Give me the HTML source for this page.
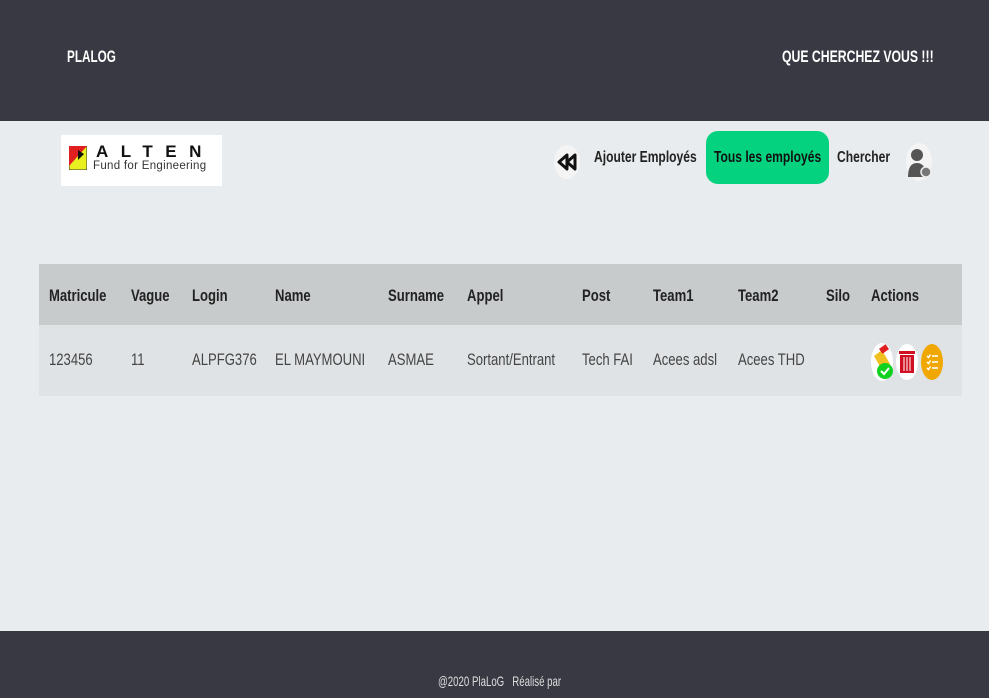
<!DOCTYPE html>
<html><head><meta charset="utf-8"><style>
*{margin:0;padding:0;box-sizing:border-box}
body{width:989px;height:698px;overflow:hidden;background:#e9ecee;font-family:"Liberation Sans",sans-serif;position:relative}
.t{position:absolute;white-space:nowrap;transform-origin:0 50%;transform:scaleX(.77);line-height:20px}
.b{font-weight:bold}
</style></head><body>
<div style="position:absolute;left:0;top:0;width:989px;height:121px;background:#393944"></div>
<div class="t b" style="left:67px;top:47px;color:#fff;font-size:17px;transform:scaleX(.69)">PLALOG</div>
<div class="t b" style="left:782px;top:47px;color:#fff;font-size:17px;transform:scaleX(.72)">QUE CHERCHEZ VOUS !!!</div>

<div style="position:absolute;left:61px;top:135px;width:161px;height:51px;background:#fff"></div>
<svg style="position:absolute;left:69px;top:146px" width="18" height="24" viewBox="0 0 18 24"><rect x="0" y="0" width="18" height="24" fill="#e8f020" stroke="#333" stroke-width="1"/><polygon points="0,0 18,0 0,20" fill="#e02020"/><polygon points="9,4 15,8 9,14" fill="#111"/></svg>
<div style="position:absolute;left:96px;top:143px;font-size:17px;font-weight:bold;letter-spacing:12.5px;color:#111;line-height:17px">ALTEN</div>
<div style="position:absolute;left:93px;top:160px;font-size:11.5px;color:#333;line-height:13px;letter-spacing:0.3px">Fund for Engineering</div>

<div style="position:absolute;left:554px;top:145px;width:26px;height:34px;border-radius:50%;background:#f4f4f4"></div>
<svg style="position:absolute;left:557px;top:153px" width="20" height="18" viewBox="0 0 20 18"><path d="M10 2 L2 9 L10 16 Z M18 2 L10 9 L18 16 Z" fill="none" stroke="#111" stroke-width="3" stroke-linejoin="round"/></svg>
<div class="t b" style="left:594px;top:148px;font-size:16px;color:#222;transform:scaleX(.755)">Ajouter Employés</div>
<div style="position:absolute;left:706px;top:131px;width:123px;height:53px;border-radius:12px;background:#05d27f"></div>
<div class="t b" style="left:714px;top:148px;font-size:16px;color:#111;transform:scaleX(.755)">Tous les employés</div>
<div class="t b" style="left:837px;top:148px;font-size:16px;color:#222;transform:scaleX(.755)">Chercher</div>
<div style="position:absolute;left:906px;top:143px;width:26px;height:38px;border-radius:50%;background:#f4f4f4"></div>
<svg style="position:absolute;left:906px;top:145px" width="26" height="36" viewBox="0 0 26 36"><circle cx="11" cy="10" r="6" fill="#555"/><path d="M2 32 Q2 18 11 18 Q20 18 20 32 Z" fill="#555"/><circle cx="20" cy="27" r="5" fill="#777" stroke="#eee" stroke-width="1.5"/></svg>

<div style="position:absolute;left:39px;top:264px;width:923px;height:61px;background:#c8cbcc"></div>
<div style="position:absolute;left:39px;top:325px;width:923px;height:71px;background:#e0e3e5"></div>
<div class="b" style="position:absolute;top:286px;left:0;font-size:17px;color:#222">
<span class="t" style="left:49px">Matricule</span><span class="t" style="left:131px">Vague</span><span class="t" style="left:192px">Login</span><span class="t" style="left:275px">Name</span><span class="t" style="left:388px">Surname</span><span class="t" style="left:467px">Appel</span><span class="t" style="left:582px">Post</span><span class="t" style="left:653px">Team1</span><span class="t" style="left:738px">Team2</span><span class="t" style="left:826px">Silo</span><span class="t" style="left:871px">Actions</span></div>
<div style="position:absolute;top:350px;left:0;font-size:17px;color:#444">
<span class="t" style="left:49px">123456</span><span class="t" style="left:131px">11</span><span class="t" style="left:192px">ALPFG376</span><span class="t" style="left:275px">EL MAYMOUNI</span><span class="t" style="left:388px">ASMAE</span><span class="t" style="left:467px">Sortant/Entrant</span><span class="t" style="left:582px">Tech FAI</span><span class="t" style="left:653px">Acees adsl</span><span class="t" style="left:738px">Acees THD</span></div>

<svg style="position:absolute;left:870px;top:342px" width="76" height="42" viewBox="0 0 76 42">
<ellipse cx="12" cy="20" rx="11" ry="19" fill="#fff"/><polygon points="4,14 12,8 20,22 12,28" fill="#f0c020"/><rect x="10" y="4" width="8" height="6" fill="#e02020" transform="rotate(-35 14 7)"/><circle cx="15" cy="29" r="8" fill="#10d020"/><path d="M11 29 l3 3 l5 -6" stroke="#fff" stroke-width="2" fill="none"/>
<ellipse cx="37" cy="20" rx="11" ry="18" fill="#fff"/><rect x="30" y="13" width="14" height="18" fill="#d01020"/><rect x="29" y="9" width="16" height="3" fill="#d01020"/><path d="M34 15v14M37 15v14M40 15v14" stroke="#fff" stroke-width="1"/>
<ellipse cx="62" cy="20" rx="11" ry="18" fill="#f0a800"/><path d="M57 14l1.5 1.5l2-3M57 20l1.5 1.5l2-3M57 26l1.5 1.5l2-3M62 14h6M62 20h6M62 26h6" stroke="#fff" stroke-width="1.5" fill="none"/>
</svg>

<div style="position:absolute;left:0;top:631px;width:989px;height:67px;background:#393944"></div>
<div class="t" style="left:438px;top:671px;color:#ddd;font-size:14px;transform:scaleX(.69)">@2020 PlaLoG &nbsp; Réalisé par</div>
</body></html>
